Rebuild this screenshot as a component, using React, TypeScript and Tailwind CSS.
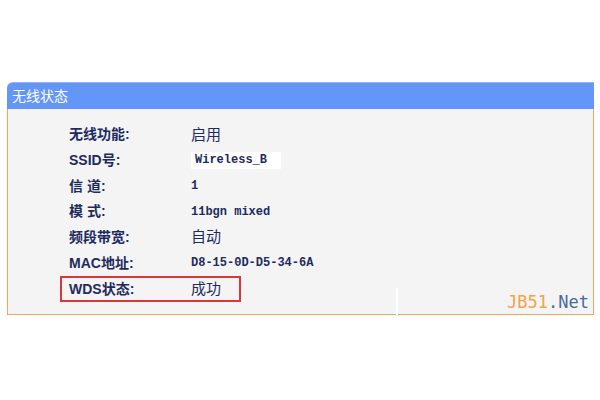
import React from 'react';

interface Row {
  label: string;
  value: string;
  mono?: boolean;
  boxed?: boolean;
}

const rows: Row[] = [
  { label: '无线功能:', value: '启用' },
  { label: 'SSID号:', value: 'Wireless_B', mono: true, boxed: true },
  { label: '信 道:', value: '1', mono: true },
  { label: '模 式:', value: '11bgn mixed', mono: true },
  { label: '频段带宽:', value: '自动' },
  { label: 'MAC地址:', value: 'D8-15-0D-D5-34-6A', mono: true },
];

const cjk = "font-['Liberation_Sans','Noto_Sans_CJK_SC',sans-serif]";
const mono = "font-['Liberation_Mono','Noto_Sans_CJK_SC',monospace]";

const StatusRow: React.FC<{ row: Row }> = ({ row }) => (
  <div className="flex items-center h-[25.7px]">
    <div className={`w-[122px] text-[14px] font-bold text-[#1d2b60] ${cjk}`}>{row.label}</div>
    {row.mono ? (
      <div
        className={`text-[12px] font-bold text-[#1d2b60] ${mono} ${
          row.boxed ? 'bg-white w-[90px] h-[17px] pl-[4px] leading-[17px]' : ''
        }`}
      >
        {row.value}
      </div>
    ) : (
      <div className={`text-[15px] text-[#1d2b60] ${cjk}`}>{row.value}</div>
    )}
  </div>
);

export default function App() {
  return (
    <div className="w-[600px] h-[400px] bg-white pt-[82px] pl-[7px]">
      <div className="relative w-[587px]">
        <div className="h-[27px] bg-[#6495f8] border-t border-[#8fb2fb] rounded-tl-[6px] flex items-center pl-[5px]">
          <span className={`text-white text-[14px] ${cjk}`}>无线状态</span>
        </div>
        <div className="h-[206px] bg-[#f4f4f4] border-l border-r border-b border-[#f2a55a] pt-[13px] pl-[60px]">
          <div className="pl-[1px]">
            {rows.map((r) => (
              <StatusRow key={r.label} row={r} />
            ))}
          </div>
          <div className="w-[181px] h-[26px] border-2 border-[#d9373a] -ml-[8px] flex items-center pl-[7px]">
            <div className={`w-[122px] text-[14px] font-bold text-[#1d2b60] ${cjk}`}>WDS状态:</div>
            <div className={`text-[15px] text-[#1d2b60] ${cjk}`}>成功</div>
          </div>
        </div>
        <div className="absolute left-[389px] top-[206px] w-[2px] h-[27px] bg-white" />
        <div className="absolute right-[5px] bottom-[4px] text-[17px] leading-none font-['DejaVu_Sans_Mono',monospace]">
          <span className="text-[#f5a24a]">JB51</span>
          <span className="text-[#4b6b96]">.Net</span>
        </div>
      </div>
    </div>
  );
}
